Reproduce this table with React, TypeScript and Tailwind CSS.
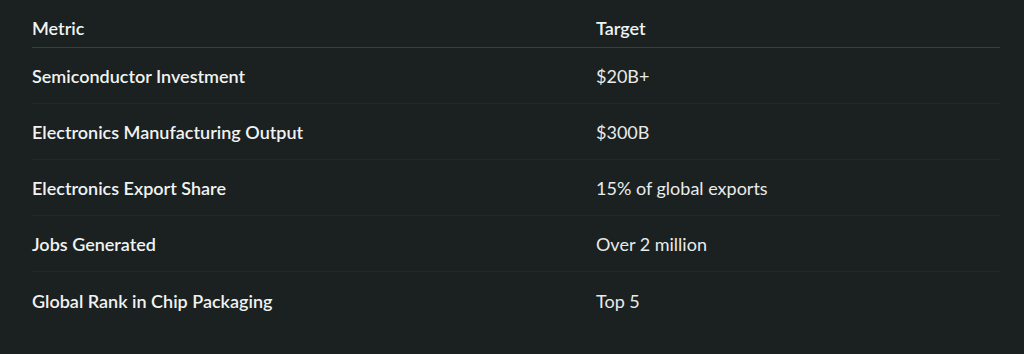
const rows: [string, string][] = [
  ["Semiconductor Investment", "$20B+"],
  ["Electronics Manufacturing Output", "$300B"],
  ["Electronics Export Share", "15% of global exports"],
  ["Jobs Generated", "Over 2 million"],
  ["Global Rank in Chip Packaging", "Top 5"],
];

export default function App() {
  return (
    <div className="min-h-[354px] bg-[#1a2120] pt-2 pl-8 pr-6 pb-[26px] font-['Lato',sans-serif] text-[18px] text-[#f1f2f2]">
      <div className="grid h-10 grid-cols-[564px_1fr] items-center border-b border-[#363f3e] pt-0.5">
        <div className="font-semibold">Metric</div>
        <div className="font-semibold">Target</div>
      </div>
      {rows.map(([metric, target], i) => (
        <div
          key={metric}
          className={
            i < rows.length - 1
              ? "grid h-14 grid-cols-[564px_1fr] items-center border-b border-[#222a29] pt-0.5"
              : "grid h-14 grid-cols-[564px_1fr] items-center pt-0.5"
          }
        >
          <div className="font-semibold">{metric}</div>
          <div className="text-[#e9ebea]">{target}</div>
        </div>
      ))}
    </div>
  );
}
